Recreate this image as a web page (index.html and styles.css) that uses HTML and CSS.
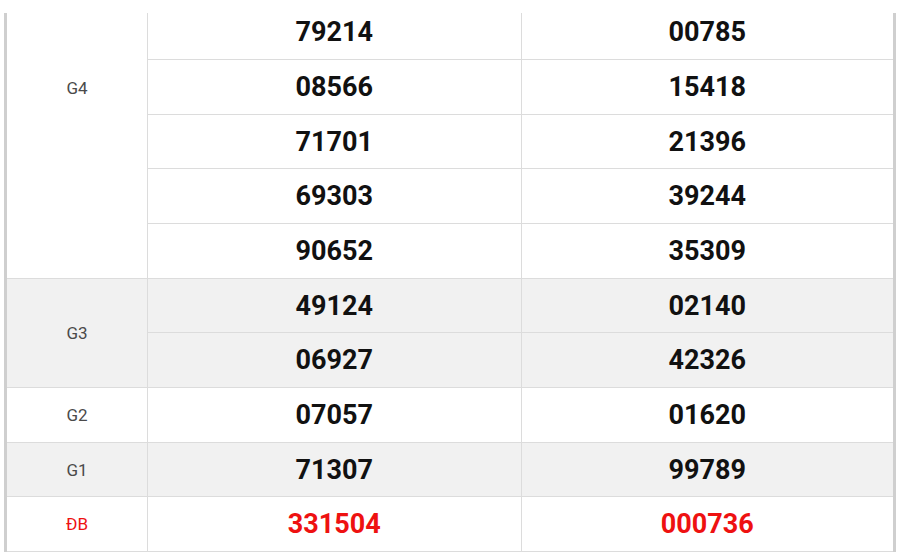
FILE: index.html
```html
<!DOCTYPE html>
<html>
<head>
<meta charset="utf-8">
<link rel="stylesheet" href="styles.css">
</head>
<body>
<div class="frame">
<table class="kq">
  <colgroup><col class="c-label"><col class="c-num"><col class="c-num"></colgroup>
  <tbody>
    <tr><td class="label g4" rowspan="5">G4</td><td>79214</td><td>00785</td></tr>
    <tr><td>08566</td><td>15418</td></tr>
    <tr><td>71701</td><td>21396</td></tr>
    <tr><td>69303</td><td>39244</td></tr>
    <tr><td>90652</td><td>35309</td></tr>
    <tr class="alt"><td class="label" rowspan="2">G3</td><td>49124</td><td>02140</td></tr>
    <tr class="alt"><td>06927</td><td>42326</td></tr>
    <tr><td class="label">G2</td><td>07057</td><td>01620</td></tr>
    <tr class="alt"><td class="label">G1</td><td>71307</td><td>99789</td></tr>
    <tr class="db"><td class="label">ĐB</td><td>331504</td><td>000736</td></tr>
  </tbody>
</table>
</div>
</body>
</html>
```
FILE: styles.css
```css
html, body { margin: 0; padding: 0; background: #fff; }
.frame {
  margin: 13px 0 0 4px;
  width: 892px;
  height: 540px;
  overflow: hidden;
}
.kq {
  width: 892px;
  margin-top: -8.5px;
  border-collapse: collapse;
  table-layout: fixed;
  font-family: Roboto, "Liberation Sans", sans-serif;
  border-left: 3px solid #cfcfcf;
  border-right: 3px solid #cfcfcf;
}
.c-label { width: 142px; }
.kq tr { height: 54.67px; }
.kq td {
  border: 1px solid #dcdcdc;
  text-align: center;
  vertical-align: middle;
  padding: 0;
  font-size: 27px;
  font-weight: 700;
  color: #111;
}
.kq td.label {
  font-size: 17px;
  font-weight: 400;
  color: #4a4a4a;
}
.kq td.g4 {
  vertical-align: top;
  padding-top: 72px;
}
.kq tr.alt td { background: #f1f1f1; }
.kq tr.db td { color: #ee1111; }
```
